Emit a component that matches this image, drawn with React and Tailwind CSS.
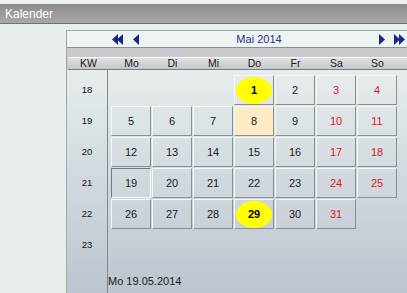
const days = ["Mo", "Di", "Mi", "Do", "Fr", "Sa", "So"];

// one row per calendar week, null = empty slot
const weeks = [
  { kw: 18, days: [null, null, null, 1, 2, 3, 4] },
  { kw: 19, days: [5, 6, 7, 8, 9, 10, 11] },
  { kw: 20, days: [12, 13, 14, 15, 16, 17, 18] },
  { kw: 21, days: [19, 20, 21, 22, 23, 24, 25] },
  { kw: 22, days: [26, 27, 28, 29, 30, 31, null] },
  { kw: 23, days: [null, null, null, null, null, null, null] },
];

const marked = [1, 29];

function Arrow({ dir = "left", double = false }) {
  const w = double ? 12 : 6;
  const tri = (x) =>
    dir === "left"
      ? `M${x + 6} 0 L${x} 5.5 L${x + 6} 11 Z`
      : `M${x} 0 L${x + 6} 5.5 L${x} 11 Z`;
  return (
    <svg width={w} height="11" viewBox={`0 0 ${w} 11`} className="shrink-0">
      <path d={tri(0)} fill="#16288c" />
      {double && <path d={tri(5)} fill="#16288c" />}
    </svg>
  );
}

function DayCell({ day, col }) {
  if (day === null) return <div className="h-[30px] w-[40px]" />;

  const weekend = col >= 5;
  const today = day === 19;
  const selected = day === 8;
  const isMarked = marked.includes(day);

  let cls =
    "relative flex h-[30px] w-[40px] items-center justify-center border ";
  if (today) cls += "border-t-[#74787c] border-l-[#74787c] border-b-white border-r-white";
  else cls += "border-t-[#f6f8f8] border-l-[#f6f8f8] border-b-[#8c8f92] border-r-[#8c8f92]";
  if (selected) cls += " bg-[#fdebc6]";

  return (
    <div className={cls}>
      {isMarked && (
        <span className="absolute left-[1px] top-[1px] h-[27px] w-[36px] rounded-[50%] bg-[#ffff00]" />
      )}
      <span
        className={`relative text-[11px] ${isMarked ? "font-bold text-black" : ""} ${
          !isMarked && weekend ? "text-[#e0142c]" : ""
        } ${!isMarked && !weekend ? "text-[#1a1a22]" : ""}`}
      >
        {day}
      </span>
    </div>
  );
}

export default function App() {
  return (
    <div className="flex h-[293px] w-[407px] flex-col overflow-hidden bg-[#e8eeee] font-['Liberation_Sans',Arial,sans-serif]">
      {/* Top strip */}
      <div className="h-[4px] bg-[#eef2f2]" />

      {/* Title bar */}
      <div className="flex h-[20px] items-center border-b border-[#727272] bg-gradient-to-b from-[#8c8c8c] to-[#a8a8a8] pl-[5px] text-[12px] text-white">
        Kalender
      </div>

      {/* Calendar panel */}
      <div className="flex flex-1 flex-col pl-[66px] pt-[6px]">
        <div className="flex flex-1 flex-col border-l border-t border-[#a2a6a8]">
          {/* Month navigation */}
          <div className="flex h-[17px] items-center border-b border-[#8c8f92] bg-[#eef3f3] pl-[45px] pr-[1px]">
            <Arrow dir="left" double />
            <span className="ml-[9px] flex">
              <Arrow dir="left" />
            </span>
            <span className="flex-1 text-center text-[11px] text-[#1d3490]">Mai 2014</span>
            <Arrow dir="right" />
            <span className="ml-[9px] flex">
              <Arrow dir="right" double />
            </span>
          </div>

          {/* Gray band + weekday header */}
          <div className="bg-[#c9cbce] pl-[1px] pt-[9px]">
            <div className="flex h-[13px] items-center border-b border-t border-b-[#7c7f82] border-t-[#f4f6f6] bg-gradient-to-b from-[#dfe1e3] to-[#c3c6ca] text-[10.5px] text-[#1a1a22]">
              <div className="w-[41px] text-center">KW</div>
              <div className="flex pl-[2px]">
                {days.map((d) => (
                  <div key={d} className="w-[41px] text-center">
                    {d}
                  </div>
                ))}
              </div>
            </div>
          </div>

          {/* Body */}
          <div className="flex flex-1 bg-gradient-to-b from-[#e7eded] to-[#bcc4ce]">
            {/* Week numbers */}
            <div className="w-[41px] border-r border-[#85888b] pt-[5px]">
              {weeks.map((w) => (
                <div key={w.kw} className="flex h-[31px] items-center justify-center text-[9.5px] text-[#111118]">
                  {w.kw}
                </div>
              ))}
            </div>

            {/* Days */}
            <div className="flex flex-1 flex-col">
              <div className="grid grid-cols-[repeat(7,40px)] gap-x-[1px] gap-y-[1px] pl-[3px] pt-[5px]">
                {weeks.map((w) =>
                  w.days.map((d, i) => <DayCell key={`${w.kw}-${i}`} day={d} col={i} />)
                )}
              </div>
              <div className="mt-[13px] text-[11px] text-[#1a1a22]">Mo 19.05.2014</div>
            </div>
          </div>
        </div>
      </div>
    </div>
  );
}
